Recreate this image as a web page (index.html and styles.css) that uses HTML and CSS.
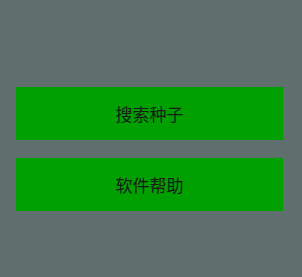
FILE: index.html
```html
<!DOCTYPE html>
<html lang="zh-CN">
<head>
    <meta charset="UTF-8">
    <meta name="viewport" content="width=device-width, initial-scale=1.0">
    <title>菜单</title>
    <link rel="stylesheet" href="styles.css">
</head>
<body>
    <div class="menu">
        <button class="menu-btn">搜索种子</button>
        <button class="menu-btn">软件帮助</button>
    </div>
</body>
</html>
```

FILE: styles.css
```css
html, body {
    margin: 0;
    height: 100%;
}

body {
    background: #5f6f6d;
    font-family: "Noto Sans CJK SC", "DejaVu Sans", sans-serif;
}

.menu {
    display: flex;
    flex-direction: column;
    gap: 18px;
    padding: 87px 19px 0 16px;
}

.menu-btn {
    height: 53px;
    border: none;
    margin: 0;
    background: #00a000;
    color: #1a1a1a;
    font-family: inherit;
    font-size: 17px;
    cursor: pointer;
}
```
